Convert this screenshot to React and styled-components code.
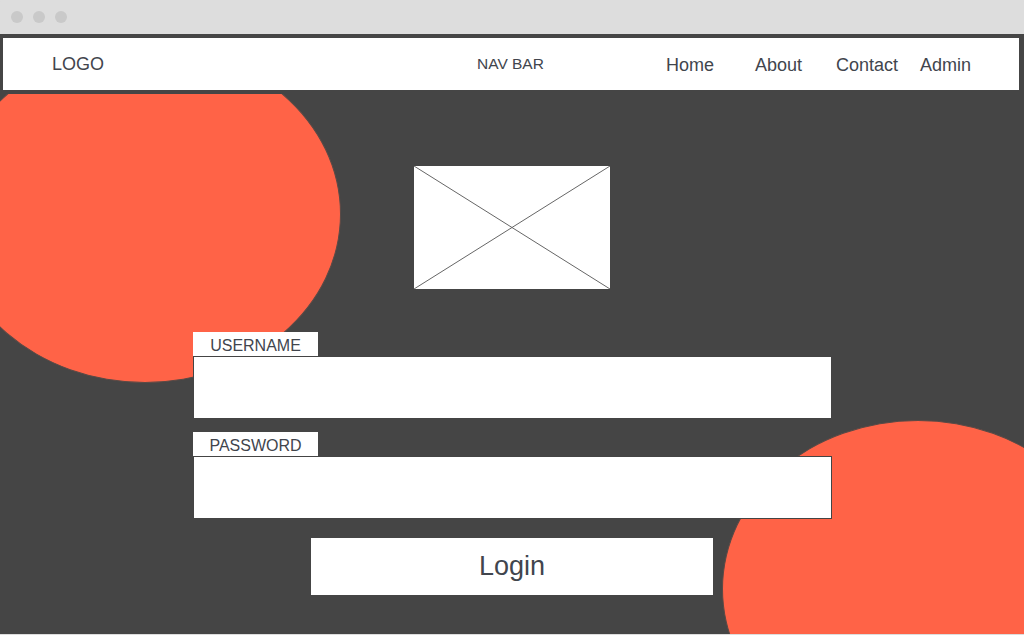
import styled, { createGlobalStyle } from "styled-components"

const Global = createGlobalStyle`
html,body{margin:0;padding:0;background:#ddd;}
body{font-family:"Liberation Sans",Arial,sans-serif;color:#41454d;}
*{box-sizing:border-box;}
`

export default function App(){
    const links=[['Home',89],['About',81],['Contact',84],['Admin',60]]
    return(
    <Janela>
        <Global/>
        <Barra>
            <Bolinha/><Bolinha/><Bolinha/>
        </Barra>
        <Tela>
            <Nav>
                <Logo>LOGO</Logo>
                <Titulo>NAV BAR</Titulo>
                <Links>
                    {links.map(([t,w])=><Link key={t} w={w}>{t}</Link>)}
                </Links>
            </Nav>
            <Conteudo>
                <Bola x={-51} y={-49}/>
                <Bola x={722} y={326}/>
                <Imagem>
                    <svg width="196" height="123" viewBox="0 0 196 123">
                        <line x1="0" y1="0" x2="196" y2="123" stroke="#666" strokeWidth="1"/>
                        <line x1="196" y1="0" x2="0" y2="123" stroke="#666" strokeWidth="1"/>
                    </svg>
                </Imagem>
                <Form>
                    <Campo>
                        <Rotulo>USERNAME</Rotulo>
                        <Entrada/>
                    </Campo>
                    <Campo>
                        <Rotulo>PASSWORD</Rotulo>
                        <Entrada type="password"/>
                    </Campo>
                </Form>
                <Botao>Login</Botao>
            </Conteudo>
        </Tela>
    </Janela>
    )
}

const Janela=styled.div`
width:1024px;height:635px;display:flex;flex-direction:column;
overflow:hidden;background:#ddd;
`
const Barra=styled.div`
height:34px;flex:none;display:flex;align-items:center;gap:10px;
padding-left:11px;background:#dddddd;border-radius:4px 4px 0 0;
`
const Bolinha=styled.span`
width:12px;height:12px;border-radius:50%;background:#c9c9c9;
`
const Tela=styled.div`
flex:1;display:flex;flex-direction:column;background:#454545;
margin-bottom:1px;padding:4px 5px 0 3px;
`
const Nav=styled.div`
height:52px;flex:none;background:#fff;display:flex;align-items:center;
padding-left:49px;position:relative;
`
const Logo=styled.div`
font-size:18px;width:425px;
`
const Titulo=styled.div`
font-size:15.5px;width:189px;
`
const Links=styled.div`
display:flex;align-items:center;padding-top:2px;
`
const Link=styled.div`
font-size:18px;width:${p=>p.w}px;
`
const Conteudo=styled.div`
flex:1;margin:4px -5px 0 -3px;position:relative;overflow:hidden;
display:flex;flex-direction:column;align-items:center;padding-top:72px;
`
const Bola=styled.div`
position:absolute;left:${p=>p.x}px;top:${p=>p.y}px;
width:392px;height:338px;border-radius:50%;
background:#ff6347;border:1px solid #5a4a46;
`
const Imagem=styled.div`
width:196px;height:123px;background:#fff;position:relative;z-index:1;
svg{display:block;}
`
const Form=styled.div`
width:639px;margin-top:43px;margin-left:1px;display:flex;flex-direction:column;gap:13px;
position:relative;z-index:1;
`
const Campo=styled.div`
display:flex;flex-direction:column;align-items:flex-start;
`
const Rotulo=styled.div`
width:125px;height:24px;background:#fff;font-size:16px;
display:flex;align-items:center;justify-content:center;padding-top:3px;
`
const Entrada=styled.input`
width:639px;height:63px;background:#fff;border:1px solid #444;
outline:none;margin:0;
`
const Botao=styled.button`
margin-top:19px;width:402px;height:57px;background:#fff;border:none;
font-family:"Liberation Sans",Arial,sans-serif;font-size:27px;color:#41454d;
position:relative;z-index:1;padding:0;cursor:pointer;
`
